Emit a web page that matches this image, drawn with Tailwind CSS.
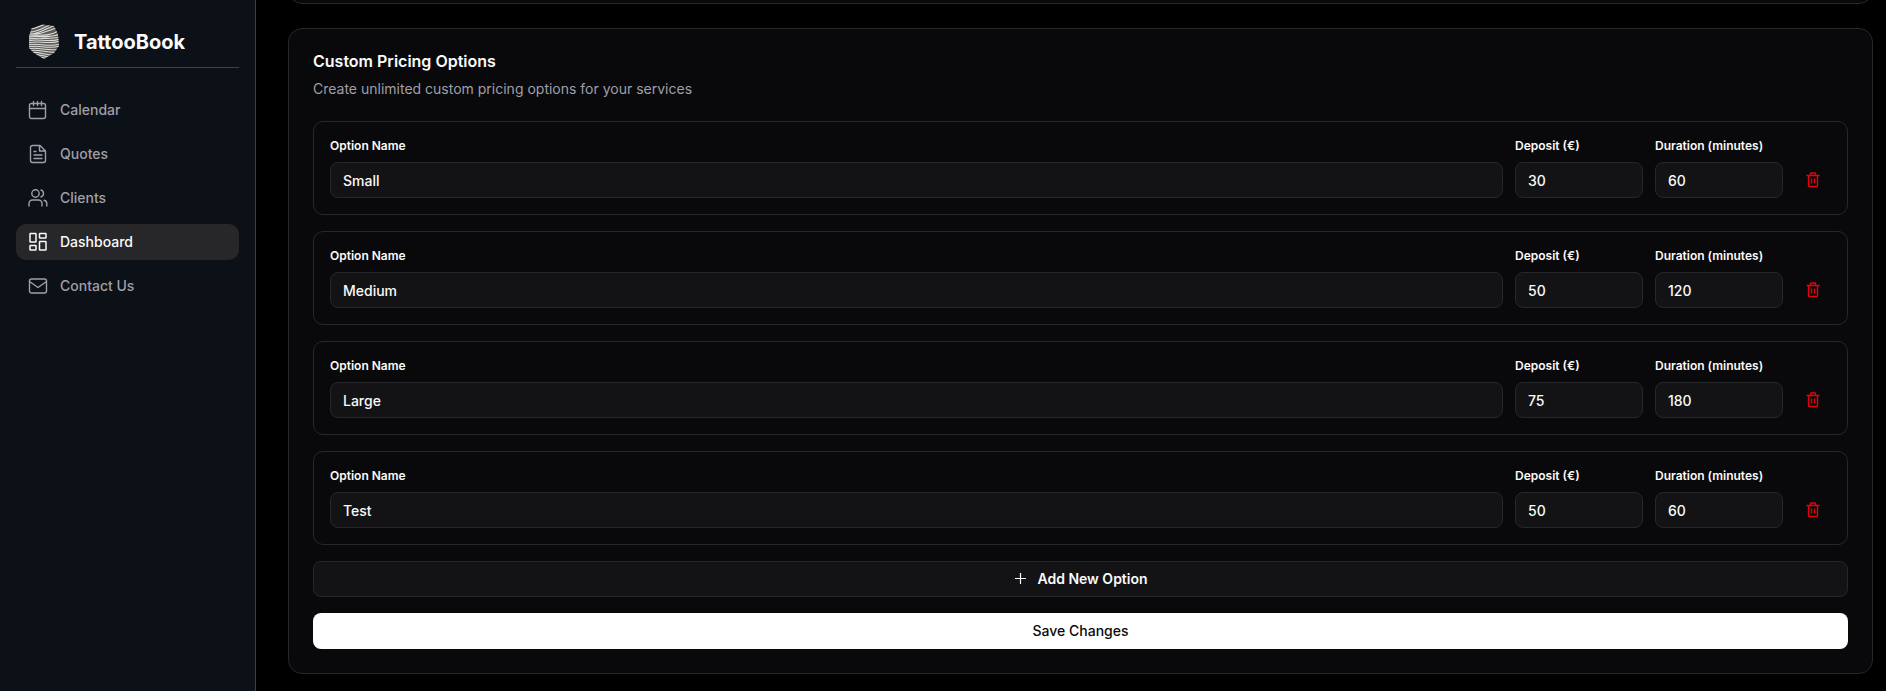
<!DOCTYPE html>
<html lang="en">
<head>
    <meta charset="UTF-8">
    <meta name="viewport" content="width=device-width, initial-scale=1.0">
    <title>TattooBook - Dashboard</title>
    <script src="https://cdn.jsdelivr.net/npm/@tailwindcss/browser@4"></script>
</head>
<body class="bg-black text-zinc-50 font-['Inter','Liberation_Sans',sans-serif] text-sm min-h-screen flex">
    <!-- Sidebar -->
    <aside class="w-64 shrink-0 bg-[#0c1017] border-r border-[#374151] px-4 py-6">
        <div class="flex items-center gap-[14px] h-11 px-3 pb-2 border-b border-[#374151]">
            <svg class="w-8 h-9" viewBox="0 0 32 36" fill="none">
                <clipPath id="shape"><path d="M3.500 4.500 14 .5 26 2 30 10 31 22 26 29 16 35 6 29 1 24 1 12Z"/></clipPath>
                <g clip-path="url(#shape)">
                    <path fill="#5c5b59" d="M0 0h32v36H0z"/>
                    <g stroke="#dededc" stroke-width="1.1">
                        <path d="M0 5C8 6 14 0 22-1M0 8C10 9 16 3 24 0M2 10C12 10 18 4 28 1M6 10C16 10 22 5 32 3"/>
                        <path d="M0 11C10 11 22 13 32 6M0 13C10 11 22 15 32 10M0 15C10 13 22 16 32 13M0 17C10 14 20 19 32 15M0 19C10 16 20 21 32 17M0 21C10 18 20 24 32 20M0 23C10 20 20 26 32 22M0 25C10 22 20 28 32 25M0 27C10 24 20 30 32 28M0 29C10 26 20 33 32 31M0 31C10 28 20 35 32 34M0 33C10 30 20 37 32 36"/>
                    </g>
                </g>
            </svg>
            <span class="text-xl font-bold">TattooBook</span>
        </div>
        <nav class="mt-6 flex flex-col gap-2 font-medium text-zinc-400">
            <a href="#" class="flex items-center gap-3 h-9 px-3 rounded-[10px]">
                <svg class="size-5" viewBox="0 0 20 20" fill="none" stroke="currentColor" stroke-width="1.4" stroke-linecap="round" stroke-linejoin="round"><rect x="1.500" y="3.500" width="16" height="15" rx="2"/><path d="M1.500 8.500h16M5.500 1.500v4M9.500 1.500v4M13.500 1.500v4"/></svg>
                Calendar
            </a>
            <a href="#" class="flex items-center gap-3 h-9 px-3 rounded-[10px]">
                <svg class="size-5" viewBox="0 0 20 20" fill="none" stroke="currentColor" stroke-width="1.4" stroke-linecap="round" stroke-linejoin="round"><path d="M12 1.500H4.500a2 2 0 0 0-2 2v13a2 2 0 0 0 2 2h11a2 2 0 0 0 2-2V7zM11.500 1.500v5.500h6M6 7.500h2M6 11h8M6 14.500h8"/></svg>
                Quotes
            </a>
            <a href="#" class="flex items-center gap-3 h-9 px-3 rounded-[10px]">
                <svg class="size-5" viewBox="0 0 20 20" fill="none" stroke="currentColor" stroke-width="1.4" stroke-linecap="round" stroke-linejoin="round"><circle cx="7.500" cy="5.500" r="3.700"/><path d="M1 18v-2.500a3.500 3.500 0 0 1 3.500-3.500h6a3.500 3.500 0 0 1 3.500 3.500V18M13 2a3.700 3.700 0 0 1 0 7M16 12.200a3.500 3.500 0 0 1 2.800 3.400V18"/></svg>
                Clients
            </a>
            <a href="#" class="flex items-center gap-3 h-9 px-3 rounded-[10px] bg-zinc-800 text-zinc-50">
                <svg class="size-5" viewBox="0 0 20 20" fill="none" stroke="currentColor" stroke-width="1.500" stroke-linejoin="round"><rect x="2" y="1.500" width="6" height="8.500" rx=".5"/><rect x="11.500" y="1.500" width="6.500" height="4.500" rx=".5"/><rect x="11.500" y="9.500" width="6.500" height="8.500" rx=".5"/><rect x="2" y="13.500" width="6" height="4.500" rx=".5"/></svg>
                Dashboard
            </a>
            <a href="#" class="flex items-center gap-3 h-9 px-3 rounded-[10px]">
                <svg class="size-5" viewBox="0 0 20 20" fill="none" stroke="currentColor" stroke-width="1.4" stroke-linecap="round" stroke-linejoin="round"><rect x="1.500" y="3" width="17" height="14" rx="2"/><path d="m1.500 5.500 8.500 6 8.500-6"/></svg>
                Contact Us
            </a>
        </nav>
    </aside>

    <main class="flex-1 min-w-0 pl-8 pr-[13px] pb-4">
        <!-- End of the previous card -->
        <div class="h-1 overflow-hidden flex items-end">
            <div class="w-full h-16 rounded-[14px] border border-zinc-800 bg-[#09090b]"></div>
        </div>

        <section class="mt-6 rounded-[14px] border border-zinc-800 bg-[#09090b] p-6">
            <h2 class="text-base leading-4 font-semibold">Custom Pricing Options</h2>
            <p class="mt-2 leading-6 text-zinc-400">Create unlimited custom pricing options for your services</p>

            <form id="pricingForm" class="mt-5 space-y-4">
                <div id="options" class="space-y-4"></div>
                <button type="button" class="w-full h-9 flex items-center justify-center gap-2 rounded-lg border border-zinc-800 bg-[#131315] font-semibold">
                    <svg class="size-4" viewBox="0 0 16 16" fill="none" stroke="currentColor" stroke-width="1.2"><path d="M7.500 2v11M2 7.500h11"/></svg>
                    Add New Option
                </button>
                <button type="submit" class="w-full h-9 rounded-lg bg-white text-zinc-950 font-medium">Save Changes</button>
            </form>
        </section>
    </main>

    <template id="optionRow">
        <div class="flex items-end gap-3 rounded-[10px] border border-zinc-800 p-4">
            <label class="flex-1 text-xs font-semibold">Option Name
                <input type="text" class="block mt-2 w-full h-9 px-3 rounded-lg border border-zinc-800 bg-[#131315] text-sm font-medium">
            </label>
            <label class="w-32 text-xs font-semibold whitespace-nowrap">Deposit (€)
                <input type="text" inputmode="numeric" class="block mt-2 w-full h-9 px-3 rounded-lg border border-zinc-800 bg-[#131315] text-sm font-medium">
            </label>
            <label class="w-32 text-xs font-semibold whitespace-nowrap">Duration (minutes)
                <input type="text" inputmode="numeric" class="block mt-2 w-full h-9 px-3 rounded-lg border border-zinc-800 bg-[#131315] text-sm font-medium">
            </label>
            <button type="button" aria-label="Delete option" class="size-9 flex items-center justify-center text-[#e7000b]">
                <svg class="size-4" viewBox="0 0 16 16" fill="none" stroke="currentColor" stroke-width="1.4" stroke-linejoin="round"><path d="M1.500 3.500h13M3.500 3.500v10a1 1 0 0 0 1 1h7a1 1 0 0 0 1-1v-10M5.500 3.500v-2a.5.5 0 0 1 .5-.5h4a.5.5 0 0 1 .5.5v2M6.500 6.500v5M9.500 6.500v5"/></svg>
            </button>
        </div>
    </template>

    <script>
        const options = [
            ["Small", 30, 60],
            ["Medium", 50, 120],
            ["Large", 75, 180],
            ["Test", 50, 60]
        ];

        const list = document.getElementById("options");
        const template = document.getElementById("optionRow");

        options.forEach(function(values) {
            const row = template.content.cloneNode(true);
            row.querySelectorAll("input").forEach(function(input, i) {
                input.value = values[i];
            });
            list.appendChild(row);
        });
    </script>
</body>
</html>
